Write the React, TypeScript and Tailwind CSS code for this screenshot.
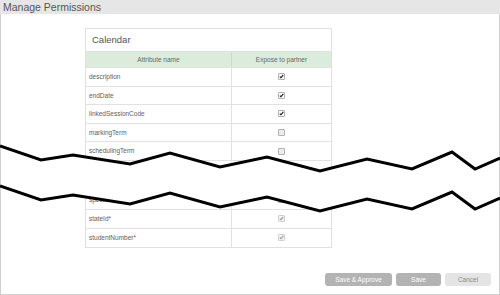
import React from "react";

type CbState = "checked" | "unchecked" | "disabled";

function Checkbox({ state }: { state: CbState }) {
  if (state === "unchecked") {
    return <div className="w-[7px] h-[7px] border border-[#b0b0b0] bg-[#ececec] rounded-[1px]" />;
  }
  const color = state === "checked" ? "#111" : "#9a9a9a";
  return (
    <div className={`w-[7px] h-[7px] border rounded-[1px] flex items-center justify-center ${state === "checked" ? "border-[#b0b0b0] bg-white" : "border-[#d0d0d0] bg-[#f4f4f4]"}`}>
      <svg width="7" height="7" viewBox="0 0 7 7">
        <path d="M1.2 3.6 L2.8 5.2 L6 1.2" fill="none" stroke={color} strokeWidth="1.5" />
      </svg>
    </div>
  );
}

function Row({ name, state, req, h }: { name: string; state: CbState; req?: boolean; h: string }) {
  return (
    <div className={`flex border-t border-[#e2e2e2] ${h}`}>
      <div className="w-[146px] border-r border-[#e2e2e2] flex items-center pl-[3px] text-[6.5px] text-[#606060]">
        {name}
        {req && <span className="text-[#c04040]">*</span>}
      </div>
      <div className="flex-1 flex items-center justify-center">
        <Checkbox state={state} />
      </div>
    </div>
  );
}

const top: { name: string; state: CbState }[] = [
  { name: "description", state: "checked" },
  { name: "endDate", state: "checked" },
  { name: "linkedSessionCode", state: "checked" },
  { name: "markingTerm", state: "unchecked" },
  { name: "schedulingTerm", state: "unchecked" },
];

const topLine: [number, number][] = [
  [0, 146], [41, 160], [73, 155], [130, 164], [170, 153], [220, 167], [267, 157],
  [320, 171], [367, 159], [412, 169], [452, 152], [475, 169], [500, 158],
];
const botLine: [number, number][] = topLine.map(([x, y]) => [x, y + 40]);

export default function App() {
  const pts = (a: [number, number][]) => a.map(([x, y]) => `${x},${y}`).join(" ");
  const clamp = ([x, y]: [number, number]): [number, number] => [Math.min(Math.max(x, 1), 498), y];
  const poly = [...topLine.map(clamp), ...[...botLine].reverse().map(clamp)];
  return (
    <div className="relative w-[500px] h-[295px] bg-white flex flex-col overflow-hidden" style={{ fontFamily: '"Liberation Sans", Arial, sans-serif' }}>
      <div className="h-[14px] bg-[#e6e6e6] flex items-center pl-[3px] text-[10.5px] text-[#555] leading-none">
        Manage Permissions
      </div>
      <div className="flex-1 border-l border-r border-b border-[#d0d0d0] flex flex-col justify-between">
        <div className="ml-[84px] mt-[14px] w-[247px] border border-[#e0e0e0] bg-white">
          <div className="h-[22px] flex items-center pl-[6px] text-[9.5px] text-[#555]">Calendar</div>
          <div className="flex h-[16px] border-t border-[#d8e4d8] bg-[#dcecdc] text-[6.5px] text-[#666]">
            <div className="w-[146px] border-r border-[#c9dcc9] flex items-center justify-center">Attribute name</div>
            <div className="flex-1 flex items-center justify-center">Expose to partner</div>
          </div>
          {top.map((r) => (
            <Row key={r.name} name={r.name} state={r.state} h="h-[18.6px]" />
          ))}
          <Row name="sessionType" state="unchecked" h="h-[30px]" />
          <Row name="specialProgram" state="unchecked" h="h-[19px]" />
          <Row name="stateId" state="disabled" req h="h-[19px]" />
          <Row name="studentNumber" state="disabled" req h="h-[19px]" />
        </div>
        <div className="flex justify-end gap-[4px] pr-[8px] pb-[8px] text-[6.5px]">
          <div className="w-[67px] h-[13px] rounded-[3px] bg-[#b3b3b3] text-white flex items-center justify-center">Save &amp; Approve</div>
          <div className="w-[45px] h-[13px] rounded-[3px] bg-[#b3b3b3] text-white flex items-center justify-center">Save</div>
          <div className="w-[46px] h-[13px] rounded-[3px] bg-[#e4e4e4] text-[#8a8a8a] flex items-center justify-center">Cancel</div>
        </div>
      </div>
      <svg className="absolute left-0 top-0 pointer-events-none" width="500" height="295" viewBox="0 0 500 295">
        <polygon points={pts(poly)} fill="#ffffff" />
        <polyline points={pts(topLine)} fill="none" stroke="#000" strokeWidth="3" strokeLinejoin="miter" />
        <polyline points={pts(botLine)} fill="none" stroke="#000" strokeWidth="3" strokeLinejoin="miter" />
      </svg>
    </div>
  );
}
